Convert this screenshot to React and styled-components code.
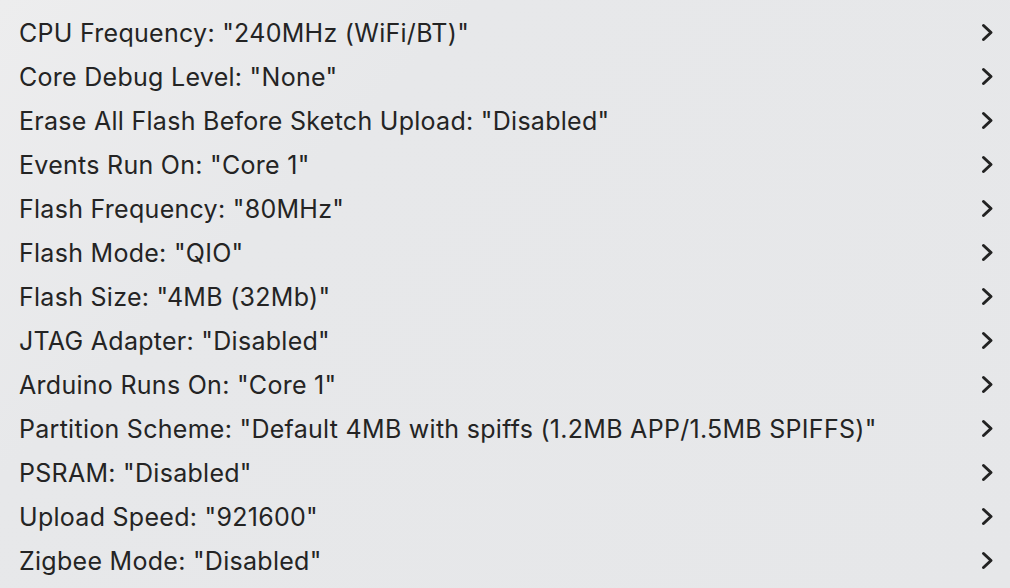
import React from "react";
import styled, { createGlobalStyle } from "styled-components";

const Global = createGlobalStyle`
  html, body { margin: 0; padding: 0; }
  body {
    width: 1010px;
    height: 588px;
    overflow: hidden;
    background: #e7e8ea;
  }
`;

const Menu = styled.div`
  width: 1010px;
  height: 588px;
  box-sizing: border-box;
  padding: 11px 0 5px;
  display: flex;
  flex-direction: column;
  background: linear-gradient(135deg, #ededee 0%, #e7e8ea 30%, #e6e7e9 100%);
  font-family: Inter, "Noto Sans", sans-serif;
`;

const Row = styled.div`
  height: 44px;
  display: flex;
  align-items: center;
  justify-content: space-between;
  padding: 0 16px 0 19px;
`;

const Label = styled.span`
  font-size: 25px;
  color: #242424;
  letter-spacing: 0.28px;
  white-space: nowrap;
`;

const Chevron = styled.svg`
  width: 13px;
  height: 20px;
  flex: none;
`;

const items = [
  'CPU Frequency: "240MHz (WiFi/BT)"',
  'Core Debug Level: "None"',
  'Erase All Flash Before Sketch Upload: "Disabled"',
  'Events Run On: "Core 1"',
  'Flash Frequency: "80MHz"',
  'Flash Mode: "QIO"',
  'Flash Size: "4MB (32Mb)"',
  'JTAG Adapter: "Disabled"',
  'Arduino Runs On: "Core 1"',
  'Partition Scheme: "Default 4MB with spiffs (1.2MB APP/1.5MB SPIFFS)"',
  'PSRAM: "Disabled"',
  'Upload Speed: "921600"',
  'Zigbee Mode: "Disabled"',
];

export default function App() {
  return (
    <>
      <Global />
      <Menu>
        {items.map((t) => (
          <Row key={t}>
            <Label>{t}</Label>
            <Chevron viewBox="0 0 13 20">
              <path d="M2.5 2.5 L10 9.5 L2.5 16.5" fill="none" stroke="#222" strokeWidth="3" strokeLinecap="round" strokeLinejoin="round" />
            </Chevron>
          </Row>
        ))}
      </Menu>
    </>
  );
}
